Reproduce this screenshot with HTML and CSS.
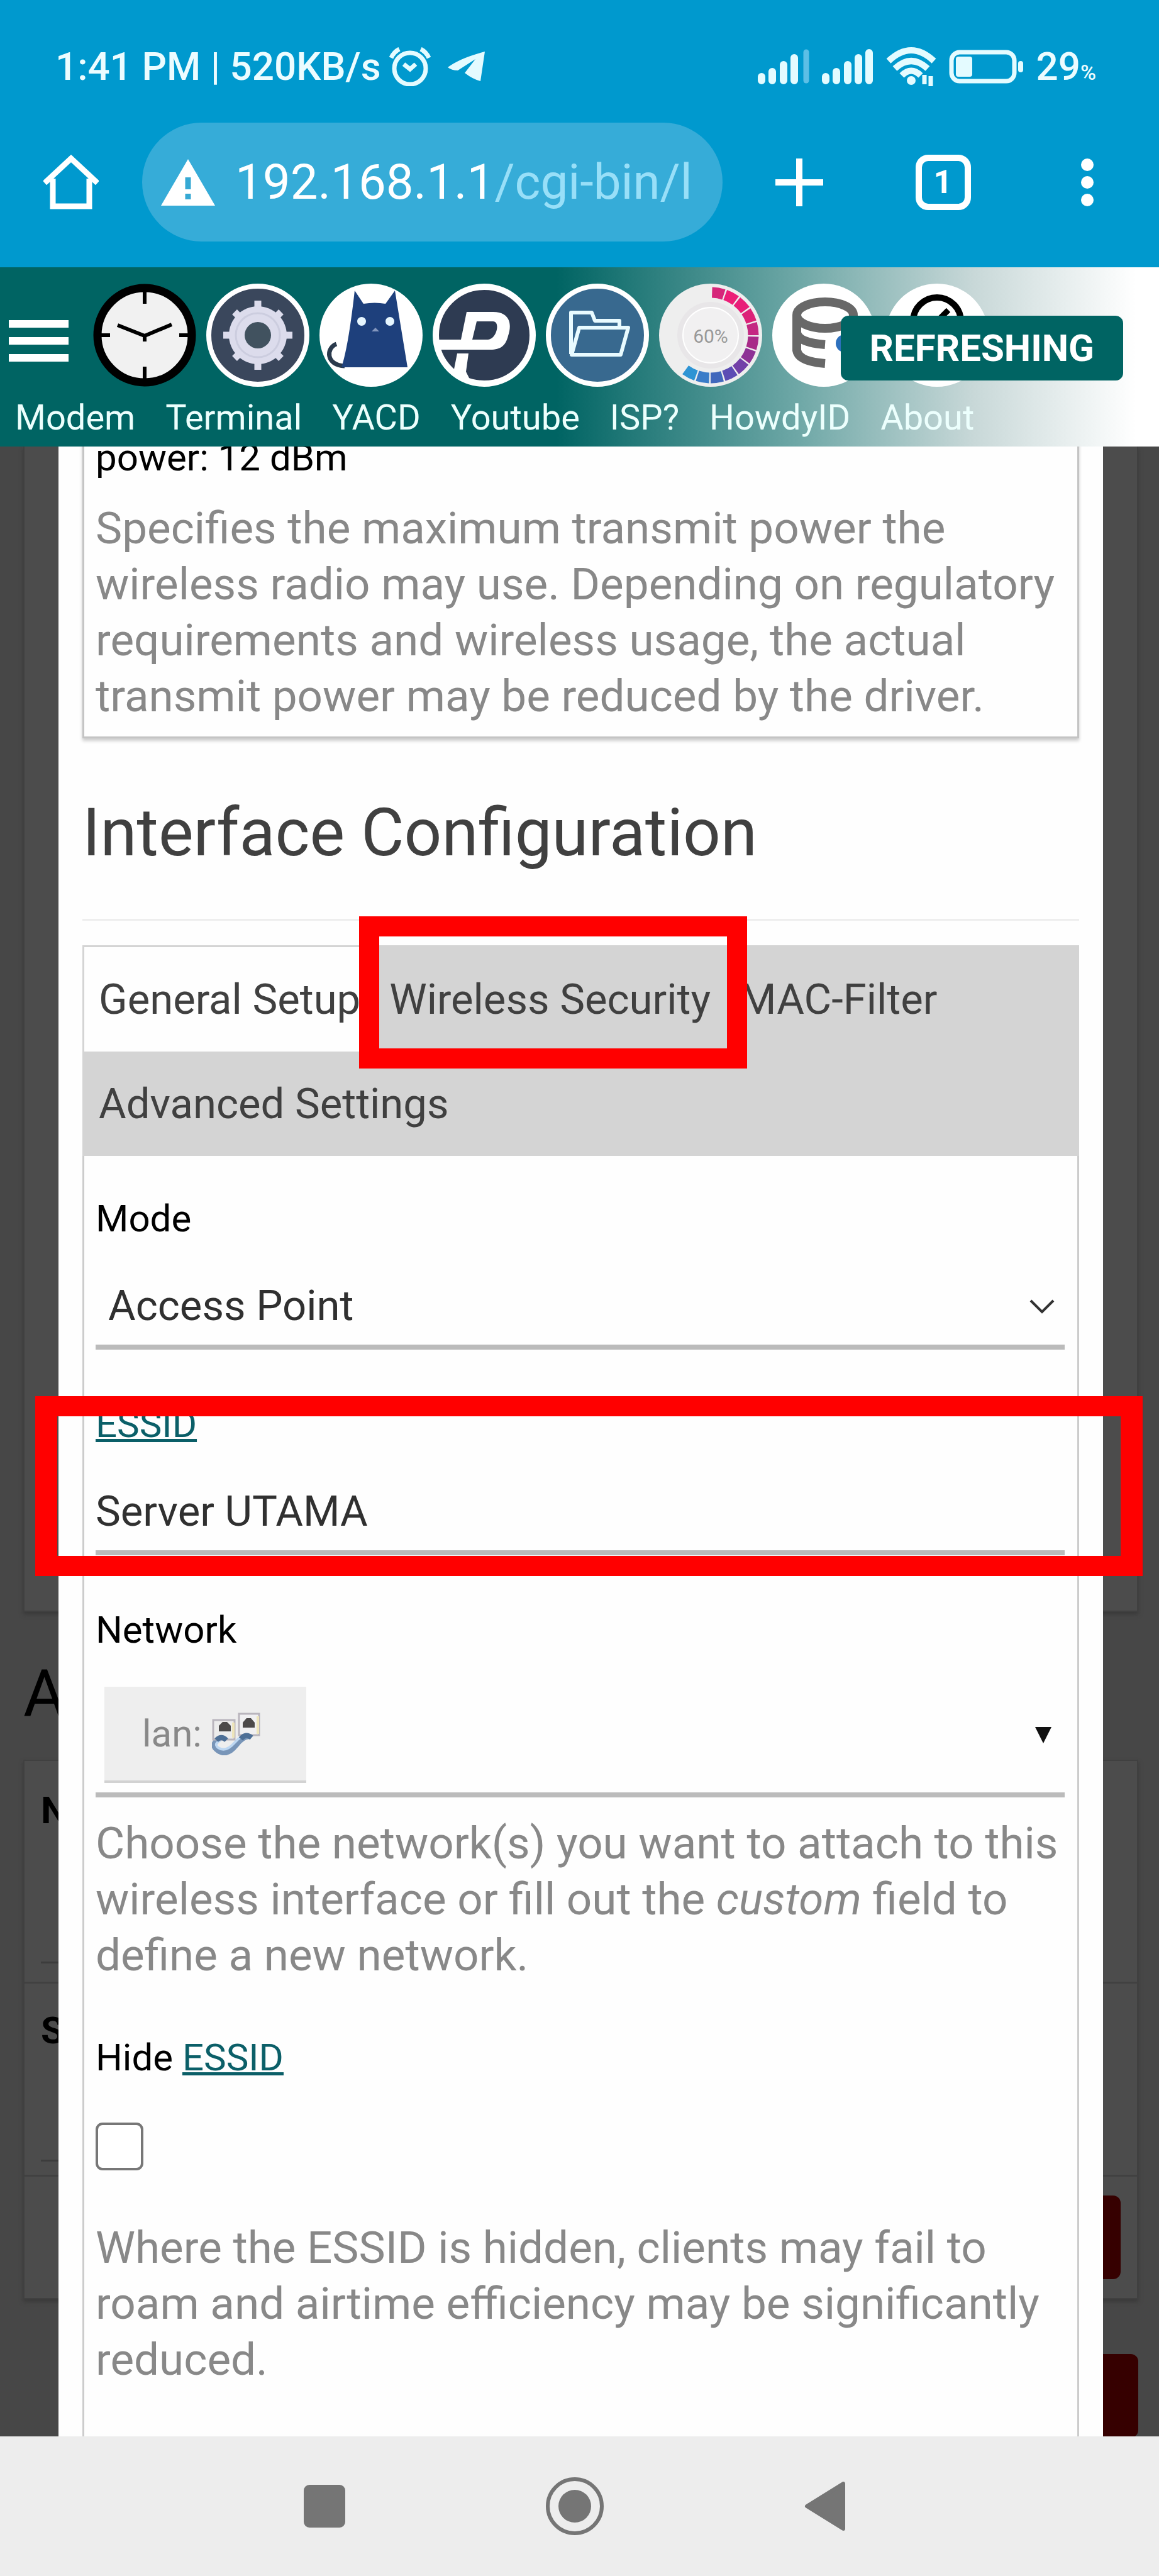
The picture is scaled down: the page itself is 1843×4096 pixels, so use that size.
FILE: index.html
```html
<!doctype html>
<html lang="en">
    <head>
        <meta charset="utf-8">
        <title>Wireless</title>
        <link rel="stylesheet" href="styles.css">
    </head>
    <body>
        <div class="status_bar">
            <div class="status_group">
                <span class="status_text">1:41 PM | 520KB/s</span>
                <svg class="alarm" viewBox="0 0 68 62" fill="none" stroke="#e4fbff" stroke-width="7">
                    <circle cx="34" cy="34" r="25"/>
                    <path d="M24 27l10 8 9-8M4 17C7 10 11 6 17 3M64 17C61 10 57 6 51 3"/>
                </svg>
                <svg class="plane" viewBox="0 0 60 48" fill="#e4fbff">
                    <path d="M59 0L52 47Q40 44 27 34L44 12 16 30Q6 30 0 25Q20 10 59 0z"/>
                </svg>
            </div>
            <div class="status_group status_right">
                <svg class="signal" viewBox="0 0 82 56" stroke="#e4fbff" stroke-width="12" stroke-linecap="round">
                    <path d="M6 44v6M23 36v14M41 25v25M58 14v36"/>
                    <path d="M77 5v45" stroke="#5cbfe6" stroke-width="9"/>
                </svg>
                <svg class="signal" viewBox="0 0 82 56" stroke="#e4fbff" stroke-width="12" stroke-linecap="round">
                    <path d="M6 44v6M23 36v14M41 25v25M58 14v36M75 6v44"/>
                </svg>
                <svg class="wifi" viewBox="0 0 80 62" fill="none" stroke="#e4fbff" stroke-width="10">
                    <path d="M4 22Q40-12 76 22M14 34Q40 10 66 34M25 45Q40 30 55 45"/>
                    <circle cx="40" cy="53" r="7" fill="#e4fbff" stroke="none"/>
                    <path d="M61 44v15M71 46v16" stroke-width="7"/>
                </svg>
                <svg class="battery" viewBox="0 0 118 54">
                    <rect x="4" y="4" width="100" height="46" rx="13" fill="none" stroke="#e4fbff" stroke-width="7"/>
                    <rect x="11" y="11" width="26" height="32" rx="4" fill="#e4fbff"/>
                    <rect x="110" y="18" width="8" height="18" rx="4" fill="#e4fbff"/>
                </svg>
                <span class="status_text">29<small>%</small></span>
            </div>
        </div>

        <div class="toolbar">
            <button class="home_button" aria-label="Home">
                <svg width="88" height="88" viewBox="0 0 88 88" fill="none" stroke="#ffffff" stroke-width="9">
                    <path d="M2 45L44 6l42 39M15 38v44h58V38"/>
                </svg>
            </button>
            <div class="address">
                <svg width="86" height="74" viewBox="0 0 86 74">
                    <path d="M43 0L86 74H0z" fill="#ffffff"/>
                    <path d="M43 29v19M43 55v9" stroke="#36a9d4" stroke-width="9"/>
                </svg>
                <span class="url">192.168.1.1<span class="url_path">/cgi-bin/l</span></span>
            </div>
            <button class="tool_button" aria-label="New tab">
                <svg width="76" height="76" viewBox="0 0 76 76" stroke="#ffffff" stroke-width="10"><path d="M38 0v76M0 38h76"/></svg>
            </button>
            <button class="tool_button" aria-label="Tabs"><span class="tab_count">1</span></button>
            <button class="tool_button" aria-label="Menu">
                <svg width="20" height="76" viewBox="0 0 20 76" fill="#ffffff"><circle cx="10" cy="10" r="10"/><circle cx="10" cy="38" r="10"/><circle cx="10" cy="66" r="10"/></svg>
            </button>
        </div>

        <header class="header">
            <div class="icon_row">
                <button class="menu_button" aria-label="Navigation"><span></span><span></span><span></span></button>
                <svg class="app_icon" viewBox="0 0 164 164">
                    <circle cx="82" cy="82" r="75" fill="#f1f1f1" stroke="#000000" stroke-width="13"/>
                    <path d="M82 12v20M82 132v20M12 82h15M137 82h15M39 66l43 17 43-18M82 80v12" fill="none" stroke="#000000" stroke-width="6"/>
                </svg>
                <svg class="app_icon" viewBox="0 0 164 164">
                    <circle cx="82" cy="82" r="78" fill="#3a475c" stroke="#ffffff" stroke-width="8"/>
                    <path d="M82 27v110M27 82h110M45 45l74 74M45 119l74-74" stroke="#dcdcec" stroke-width="11"/>
                    <circle cx="82" cy="82" r="46" fill="#dcdcec"/>
                    <circle cx="82" cy="82" r="35" fill="none" stroke="#cccddf" stroke-width="3"/>
                    <circle cx="82" cy="82" r="21" fill="#41525f"/>
                </svg>
                <svg class="app_icon" viewBox="0 0 164 164">
                    <circle cx="82" cy="82" r="82" fill="#ffffff"/>
                    <path d="M27 96C10 102 10 130 40 131" fill="none" stroke="#2a3a4c" stroke-width="7"/>
                    <path d="M56 11L70 32Q88 29 105 32L120 11Q128 60 140 133H35Q46 100 56 11z" fill="#1e407c"/>
                    <circle cx="67" cy="60" r="7" fill="#e6f6ff"/><circle cx="112" cy="60" r="7" fill="#e6f6ff"/>
                    <path d="M83 76l6-6 6 6z" fill="#8396bd"/>
                </svg>
                <svg class="app_icon" viewBox="0 0 164 164">
                    <circle cx="82" cy="82" r="77" fill="#2e3b52" stroke="#ffffff" stroke-width="10"/>
                    <path fill-rule="evenodd" d="M54 45H96C124 45 126 66 120 83C116 99 108 105 92 105H6V89H45zM70 60L63 89H88C102 88 108 60 96 60z" fill="#ffffff"/>
                    <path d="M39 111H57L53 140 60 154 32 146z" fill="#ffffff"/>
                </svg>
                <svg class="app_icon" viewBox="0 0 164 164">
                    <circle cx="82" cy="82" r="78" fill="#38698f" stroke="#ffffff" stroke-width="8"/>
                    <path d="M40 112V46H73L78 59H117V71M41 113L53 70H131L119 113z" fill="none" stroke="#e8fbff" stroke-width="6" stroke-linejoin="round"/>
                </svg>
                <svg class="app_icon" viewBox="0 0 164 164">
                    <circle cx="82" cy="82" r="82" fill="#eeeeee"/>
                    <circle cx="82" cy="82" r="53" fill="#e8e6e8"/>
                    <circle cx="82" cy="82" r="44" fill="#f1f0f1" stroke="#ffffff" stroke-width="2"/>
                    <g class="gauge">
                        <circle cx="82" cy="82" r="68" pathLength="360" stroke="#d6267a" stroke-dashoffset="-2"/>
                        <circle cx="82" cy="82" r="68" pathLength="360" stroke="#ec1f78" stroke-dashoffset="-20"/>
                        <circle cx="82" cy="82" r="68" pathLength="360" stroke="#e81e78" stroke-dashoffset="-38"/>
                        <circle cx="82" cy="82" r="68" pathLength="360" stroke="#dc2278" stroke-dashoffset="-56"/>
                        <circle cx="82" cy="82" r="68" pathLength="360" stroke="#c42882" stroke-dashoffset="-74"/>
                        <circle cx="82" cy="82" r="68" pathLength="360" stroke="#a82a88" stroke-dashoffset="-92"/>
                        <circle cx="82" cy="82" r="68" pathLength="360" stroke="#8e3296" stroke-dashoffset="-110"/>
                        <circle cx="82" cy="82" r="68" pathLength="360" stroke="#7341a8" stroke-dashoffset="-128"/>
                        <circle cx="82" cy="82" r="68" pathLength="360" stroke="#5c4cb4" stroke-dashoffset="-146"/>
                        <circle cx="82" cy="82" r="68" pathLength="360" stroke="#4168bc" stroke-dashoffset="-164"/>
                        <circle cx="82" cy="82" r="68" pathLength="360" stroke="#3a7cc8" stroke-dashoffset="-182"/>
                        <circle cx="82" cy="82" r="68" pathLength="360" stroke="#2e94d4" stroke-dashoffset="-200"/>
                    </g>
                    <text class="gauge_text" x="82" y="94" text-anchor="middle">60%</text>
                </svg>
                <svg class="app_icon" viewBox="0 0 164 164">
                    <circle cx="82" cy="82" r="82" fill="#ffffff"/>
                    <g fill="none" stroke="#686868" stroke-width="14">
                        <ellipse cx="84" cy="50" rx="45" ry="21"/>
                        <path d="M39 50V106Q42 124 84 127M39 78Q42 94 84 97M129 50V90"/>
                    </g>
                    <circle cx="115" cy="95" r="14" fill="#2d70bd"/>
                </svg>
                <svg class="app_icon" viewBox="0 0 164 164">
                    <circle cx="82" cy="82" r="82" fill="#ffffff"/>
                    <circle cx="82" cy="60" r="38" fill="none" stroke="#000000" stroke-width="10"/>
                    <path d="M82 60L100 42" stroke="#000000" stroke-width="9"/>
                </svg>
            </div>
            <nav class="links">
                <a href="#">Modem</a>
                <a href="#">Terminal</a>
                <a href="#">YACD</a>
                <a href="#">Youtube</a>
                <a href="#">ISP?</a>
                <a href="#">HowdyID</a>
                <a href="#">About</a>
            </nav>
            <span class="refreshing">REFRESHING</span>
        </header>

        <main class="stage">
            <div class="page">
                <div class="page_card page_overview"></div>
                <h2>A</h2>
                <div class="page_card">
                    <div class="page_row"><b>N</b></div>
                    <div class="page_row page_row_short"><b>S</b></div>
                    <div class="page_actions"><span class="danger"></span></div>
                </div>
                <div class="page_footer"><span class="danger"></span></div>
            </div>

            <div class="modal">
                <section class="device">
                    <div class="label">power: 12 dBm</div>
                    <p class="description">Specifies the maximum transmit power the wireless radio may use. Depending on regulatory requirements and wireless usage, the actual transmit power may be reduced by the driver.</p>
                </section>

                <h3>Interface Configuration</h3>

                <div class="tabs" role="tablist">
                    <button class="tab active" role="tab">General Setup</button>
                    <button class="tab marked" role="tab">Wireless Security</button>
                    <button class="tab" role="tab">MAC-Filter</button>
                    <button class="tab" role="tab">Advanced Settings</button>
                </div>

                <form class="panel">
                    <div class="field">
                        <label class="label" for="mode">Mode</label>
                        <div class="control">
                            <select id="mode"><option>Access Point</option></select>
                            <svg class="chevron" viewBox="0 0 40 24" fill="none" stroke="#333333" stroke-width="4"><path d="M2 2l18 18L38 2"/></svg>
                        </div>
                    </div>
                    <div class="field essid_field">
                        <label class="label" for="essid"><a href="#">ESSID</a></label>
                        <div class="control"><input id="essid" type="text" value="Server UTAMA"></div>
                    </div>
                    <div class="field">
                        <div class="label">Network</div>
                        <button class="control dropdown" type="button">
                            <span class="tag">lan:
                                <svg width="78" height="68" viewBox="0 0 78 68">
                                    <path d="M14 40Q-2 50 7 58Q22 72 38 52Q50 36 62 38" fill="none" stroke="#7895b8" stroke-width="9"/>
                                    <path d="M14 44Q2 50 10 56Q22 64 36 48Q48 34 60 36" fill="none" stroke="#bdd7f2" stroke-width="4"/>
                                    <rect x="2" y="12" width="34" height="31" fill="#ececec" stroke="#b9b5bd" stroke-width="3"/>
                                    <rect x="43" y="2" width="32" height="34" fill="#f0f0f2" stroke="#b9b5bd" stroke-width="3"/>
                                    <path d="M34 16v24M73 6v28" stroke="#eee5bb" stroke-width="4"/>
                                    <path d="M11 30v-9l6-6h7l6 6v9zM49 24v-8l6-7h7l6 7v8z" fill="#4c4a4a"/>
                                    <path d="M7 44q8-8 16 0M46 42q8-10 17-2" fill="none" stroke="#4d6f96" stroke-width="8"/>
                                </svg>
                            </span>
                            <svg width="28" height="28" viewBox="0 0 28 28" fill="#111111"><path d="M1 1h26L14 27z"/></svg>
                        </button>
                        <p class="description">Choose the network(s) you want to attach to this wireless interface or fill out the <em>custom</em> field to define a new network.</p>
                    </div>
                    <div class="field">
                        <label class="label" for="hidden">Hide <a href="#">ESSID</a></label>
                        <input id="hidden" type="checkbox">
                        <p class="description hidden_note">Where the ESSID is hidden, clients may fail to roam and airtime efficiency may be significantly reduced.</p>
                    </div>
                </form>
            </div>
        </main>

        <div class="android_nav">
            <button aria-label="Recent apps"><svg width="68" height="68" viewBox="0 0 68 68"><rect width="66" height="68" x="1" rx="9" fill="#757575"/></svg></button>
            <button aria-label="Home"><svg width="94" height="94" viewBox="0 0 94 94"><circle cx="47" cy="47" r="43" fill="none" stroke="#757575" stroke-width="6"/><circle cx="47" cy="47" r="26" fill="#757575"/></svg></button>
            <button aria-label="Back"><svg width="66" height="78" viewBox="0 0 66 78"><path d="M62 3V75L4 39z" fill="#757575" stroke="#757575" stroke-width="6" stroke-linejoin="round"/></svg></button>
        </div>
    </body>
</html>
```
FILE: styles.css
```css
* {
    box-sizing:border-box;
}

body {
    margin:0;
    height:100vh;
    display:flex;
    flex-direction:column;
    font-family:Roboto, sans-serif;
    background-color:#0099ce;
    overflow:hidden;
}

button {
    font-family:inherit;
    border:0;
    padding:0;
    background:none;
}

svg {
    display:block;
    flex:none;
}

/* phone status bar */
.status_bar {
    flex:none;
    display:flex;
    justify-content:space-between;
    align-items:center;
    height:195px;
    padding:17px 100px 0 88px;
    color:#ecfcff;
}

.status_group {
    display:flex;
    align-items:center;
    gap:12px;
}

.status_right {
    gap:20px;
}

.status_text {
    font-size:62px;
    font-weight:500;
    line-height:72px;
}

.status_text small {
    font-size:34px;
    line-height:34px;
}

.alarm {
    width:68px;
    height:62px;
}

.plane {
    width:60px;
    height:48px;
    margin-left:14px;
}

.signal {
    width:82px;
    height:56px;
}

.wifi {
    width:80px;
    height:62px;
}

.battery {
    width:118px;
    height:54px;
}

/* browser toolbar */
.toolbar {
    flex:none;
    display:flex;
    align-items:center;
    height:230px;
    padding-bottom:41px;
}

.home_button, .tool_button {
    flex:none;
    display:flex;
    justify-content:center;
    width:226px;
}

.tool_button {
    width:229px;
}

.address {
    flex:1;
    display:flex;
    align-items:center;
    gap:32px;
    height:189px;
    margin-right:7px;
    padding-left:30px;
    border-radius:95px;
    background-color:#36acd8;
    overflow:hidden;
}

.url {
    font-size:78px;
    color:#ffffff;
    white-space:nowrap;
}

.url_path {
    color:#98dff8;
}

.tab_count {
    width:88px;
    height:88px;
    border:10px solid #ffffff;
    border-radius:20px;
    font-size:52px;
    font-weight:700;
    line-height:68px;
    color:#ffffff;
}

/* router header */
.header {
    flex:none;
    position:relative;
    z-index:2;
    height:285px;
    padding:26px 14px 0;
    background:linear-gradient(90deg, #006463 48%, #6fa8a7 69%, #c8d8d8 84%, #ffffff 98%);
}

.icon_row {
    display:flex;
    align-items:center;
    gap:16px;
}

.menu_button {
    display:flex;
    flex-direction:column;
    gap:15px;
    width:95px;
    margin:18px 23px 0 0;
}

.menu_button span {
    width:95px;
    height:12px;
    background-color:#ffffff;
}

.app_icon {
    width:164px;
    height:164px;
}

.gauge {
    fill:none;
    stroke-width:17px;
}

.gauge circle {
    stroke-dasharray:16 344;
    transform:rotate(-90deg);
    transform-origin:82px 82px;
}

.gauge_text {
    font-size:30px;
    fill:#999999;
}

.links {
    display:flex;
    gap:48px;
    padding:10px;
}

.links a {
    font-size:56px;
    line-height:78px;
    color:#ecfffd;
    text-decoration:none;
}

.refreshing {
    position:absolute;
    top:77px;
    right:57px;
    padding:0 46px;
    border-radius:12px;
    background-color:#006463;
    color:#ffffff;
    font-size:60px;
    font-weight:700;
    line-height:103px;
}

/* dimmed page under the dialog */
.stage {
    flex:1;
    min-height:0;
    display:grid;
    grid-template-rows:minmax(0, 1fr);
    grid-template-columns:minmax(0, 1fr);
    background-color:#474747;
    overflow:hidden;
}

.page, .modal {
    grid-area:1 / 1;
}

.page {
    padding:0 33px 0 37px;
}

.page_card {
    border:2px solid #404040;
    background-color:#4c4c4c;
    box-shadow:0 4px 6px #3a3a3a;
}

.page_overview {
    height:1853px;
    border-top:0;
}

.page h2 {
    margin:70px 0 45px;
    font-size:103px;
    font-weight:400;
    line-height:120px;
}

.page_row {
    height:354px;
    padding:40px 26px 0;
    border-bottom:3px solid #414141;
    font-size:60px;
    line-height:78px;
}

.page_row_short {
    height:307px;
    padding-top:36px;
}

/* the right end of the field lines stays under the dialog */
.page_row::after {
    content:"";
    display:block;
    height:3px;
    margin:201px 60px 0 0;
    background-color:#3c3c3c;
}

.page_row_short::after {
    margin-top:166px;
}

.page_actions {
    display:flex;
    justify-content:flex-end;
    padding:30px 26px;
}

.page_footer {
    display:flex;
    justify-content:flex-end;
    padding-top:87px;
}

.danger {
    width:200px;
    height:133px;
    border-radius:12px;
    background-color:#360000;
}

/* dialog */
.modal {
    z-index:1;
    margin:0 89px 0 93px;
    padding:0 38px;
    background-color:#fefefe;
}

.device {
    margin-top:-21px;
    padding:0 18px 20px;
    border:3px solid #c4c4c4;
    border-top:0;
    box-shadow:0 4px 5px #cccccc;
}

.label {
    display:block;
    font-size:60px;
    line-height:78px;
    color:#000000;
}

.label a {
    color:#0b5f68;
    text-decoration-thickness:5px;
}

.description {
    margin:28px 0 0;
    font-size:71px;
    line-height:89px;
    color:#888888;
}

h3 {
    margin:91px 0 39px;
    padding-bottom:76px;
    border-bottom:3px solid #eeeeee;
    font-size:105px;
    font-weight:400;
    line-height:120px;
    color:#404040;
}

.tabs {
    display:flex;
    flex-wrap:wrap;
    border:3px solid #d4d4d4;
    border-bottom:0;
    background-color:#d4d4d4;
}

.tab {
    position:relative;
    height:166px;
    padding:0 23px;
    font-size:67px;
    color:#404040;
}

.active {
    background-color:#fefefe;
}

.marked::after {
    content:"";
    position:absolute;
    z-index:1;
    inset:-49px -35px -27px -25px;
    border:32px solid #ff0000;
}

.panel {
    display:flex;
    flex-direction:column;
    gap:80px;
    padding:61px 20px 100px 18px;
    border:3px solid #cccccc;
    border-top:0;
    border-bottom:0;
}

.control {
    position:relative;
    display:flex;
    margin-top:37px;
    border-bottom:8px solid #bbbbbb;
}

.control select, .control input {
    flex:1;
    height:124px;
    margin:0;
    padding:0;
    border:0;
    border-radius:0;
    outline:0;
    appearance:none;
    background:none;
    font-family:inherit;
    font-size:67px;
    color:#303030;
}

.control select {
    padding-left:20px;
}

.chevron {
    position:absolute;
    right:16px;
    top:52px;
    width:40px;
    height:24px;
}

.essid_field {
    position:relative;
}

.essid_field::after {
    content:"";
    position:absolute;
    inset:-6px -124px -33px -96px;
    border:solid #ff0000;
    border-width:32px 35px;
}

.dropdown {
    align-items:center;
    justify-content:space-between;
    width:100%;
    padding:14px 20px 15px 14px;
    border-bottom:8px solid #bbbbbb;
}

.tag {
    display:flex;
    align-items:center;
    gap:16px;
    height:153px;
    padding:0 72px 0 60px;
    border-bottom:4px solid #d2d2d2;
    background-color:#eeeeee;
    font-size:60px;
    color:#888888;
}

#hidden {
    display:block;
    width:76px;
    height:76px;
    margin:64px 0 0;
    border:4px solid #777777;
    border-radius:11px;
    appearance:none;
    background-color:#ffffff;
}

.hidden_note {
    margin-top:78px;
}

/* phone navigation keys */
.android_nav {
    flex:none;
    position:relative;
    z-index:2;
    display:flex;
    justify-content:center;
    height:222px;
    padding-right:15px;
    background-color:#ededed;
}

.android_nav button {
    display:flex;
    align-items:center;
    justify-content:center;
    width:398px;
}
```
